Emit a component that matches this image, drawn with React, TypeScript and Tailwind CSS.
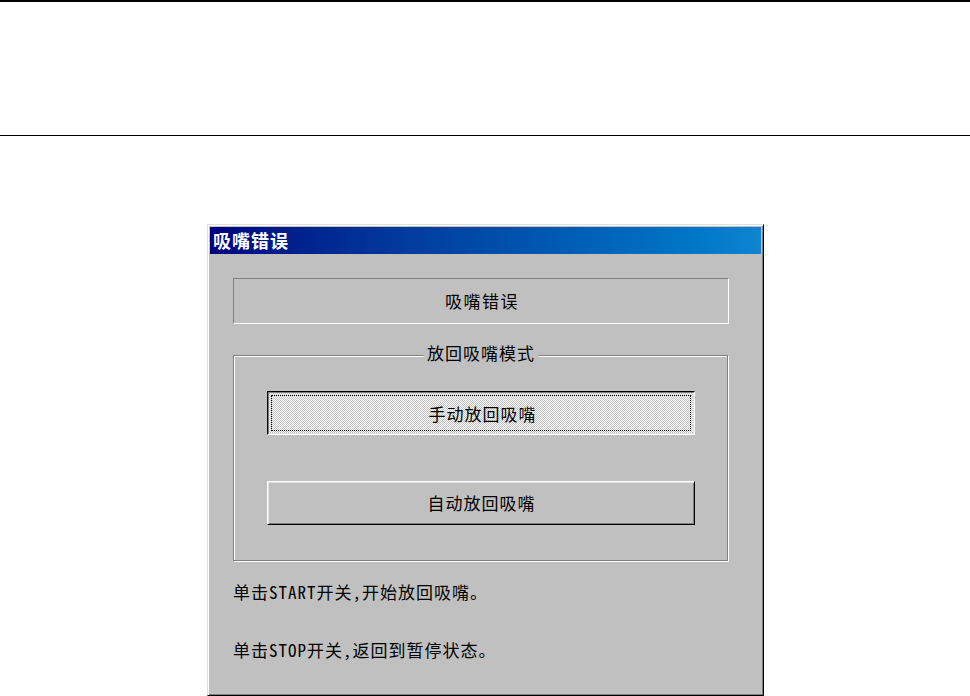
export default function App() {
  const font = "font-['Noto_Sans_Mono_CJK_SC','Noto_Sans_CJK_SC',sans-serif]";

  return (
    <div className={'flex h-[696px] w-[970px] flex-col overflow-hidden bg-white text-black ' + font}>
      <div className="h-[2px] bg-black" />
      <div className="h-[133px]" />
      <div className="h-px bg-black" />
      <div className="h-[88px]" />

      {/* dialog window */}
      <div className="ml-[207px] flex h-[472px] w-[557px] flex-col border border-t-[#dfdfdf] border-l-[#dfdfdf] border-r-black border-b-black bg-[#c0c0c0] p-[2px] shadow-[inset_1px_1px_0_#ffffff,inset_-1px_-1px_0_#808080]">
        <div className="flex h-[27px] shrink-0 items-center bg-gradient-to-r from-[#000080] to-[#1084d0] pl-[3px]">
          <span className="text-[18px] font-bold leading-[27px] tracking-[1px] text-white">吸嘴错误</span>
        </div>

        <div className="flex flex-col px-[23px]">
          <div className="mt-[24px] flex h-[46px] w-[496px] items-center justify-center border border-t-[#808080] border-l-[#808080] border-r-white border-b-white pl-[2px] text-[17px] leading-[20px] tracking-[1.5px]">
            吸嘴错误
          </div>

          {/* group box */}
          <div className="relative mt-[31px] flex h-[206px] w-[495px] flex-col border border-[#808080] pl-[33px] pt-[35px] shadow-[inset_1px_1px_0_#ffffff,1px_1px_0_#ffffff]">
            <span className="absolute left-1/2 top-[-13px] -translate-x-1/2 bg-[#c0c0c0] pl-[4px] pr-[3px] text-[17px] leading-[20px] tracking-[1px]">
              放回吸嘴模式
            </span>

            <button className="h-[44px] w-[428px] border border-t-black border-l-black border-r-white border-b-white bg-[repeating-conic-gradient(#ffffff_0%_25%,#c0c0c0_0%_50%)] bg-[length:2px_2px] p-[3px] shadow-[inset_1px_1px_0_#808080,inset_-1px_-1px_0_#dfdfdf]">
              <div className="flex h-full w-full items-center justify-center border border-dotted border-black pl-[3px] pt-[1px] text-[17px] leading-[20px] tracking-[1px]">
                手动放回吸嘴
              </div>
            </button>

            <button className="mt-[46px] flex h-[44px] w-[428px] items-center justify-center border border-t-white border-l-white border-r-black border-b-black bg-[#c0c0c0] pl-[1px] text-[17px] leading-[20px] tracking-[1px] shadow-[inset_1px_1px_0_#dfdfdf,inset_-1px_-1px_0_#808080]">
              自动放回吸嘴
            </button>
          </div>

          <p className="mt-[21px] text-[17px] leading-[20px] tracking-[1px]">单击START开关,开始放回吸嘴。</p>
          <p className="mt-[38px] text-[17px] leading-[20px] tracking-[1px]">单击STOP开关,返回到暂停状态。</p>
        </div>
      </div>
    </div>
  );
}
